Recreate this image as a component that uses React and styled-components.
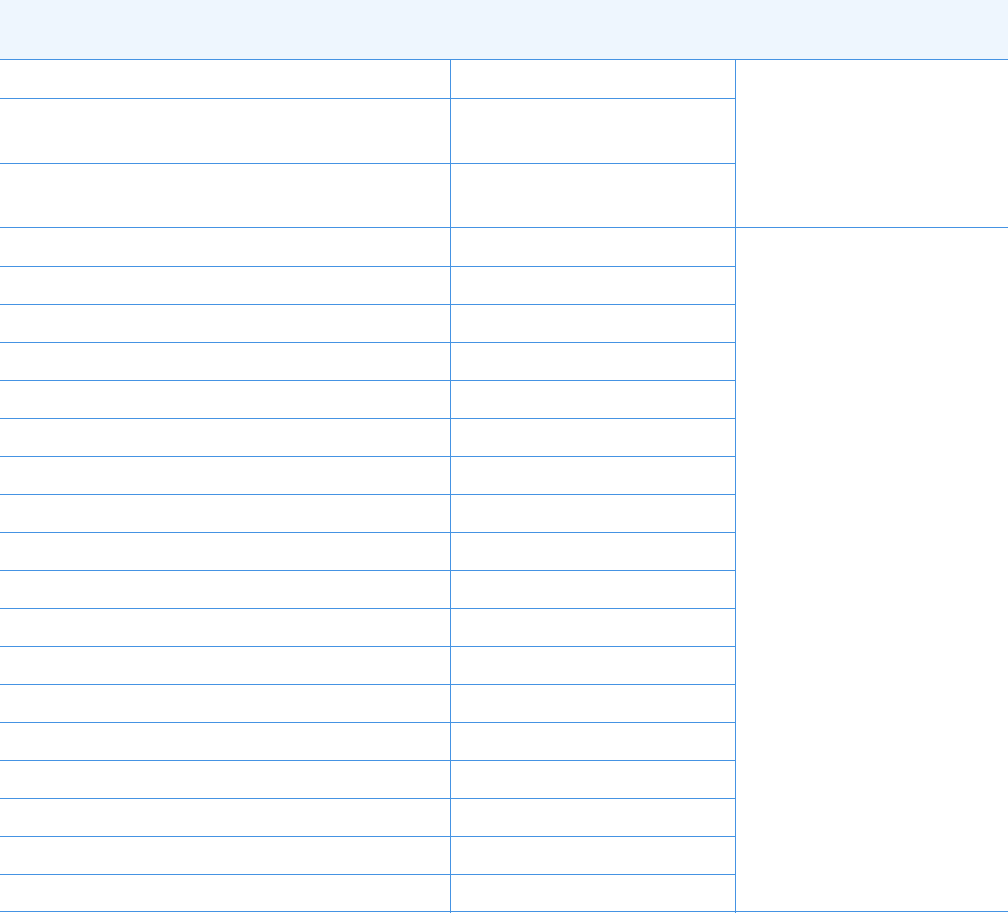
import React from 'react'
import styled, { createGlobalStyle } from 'styled-components'

const lineBlue = '#4593e3'
const headBlue = '#eef6fe'

const GlobalStyle = createGlobalStyle`
    html, body {
        margin: 0;
        padding: 0;
        background: #ffffff;
        font-family: 'Liberation Sans', Arial, sans-serif;
        overflow: hidden;
    }
`;

const Page = styled.div`
    width: 1008px;
    height: 913px;
    overflow: hidden;
`;

const Grid = styled.div`
    display: grid;
    grid-template-columns: 450px 284px 272px;
    grid-template-rows: 59px 38px 64px 63px 38px repeat(16, 37px) 36px 60px;
    gap: 1px;
    background: ${lineBlue};
    width: 1008px;
`;

const Header = styled.div`
    grid-column: 1 / -1;
    background: ${headBlue};
`;

const Cell = styled.div`
    background: #ffffff;
    grid-column: ${p => p.$col};
    grid-row: ${p => p.$rows || 'auto'};
`;

const bodyRows = Array.from({ length: 22 }, (_, i) => i + 2)

export default () => (
    <Page>
        <GlobalStyle />
        <Grid>
            <Header />
            {bodyRows.map(r => (
                <React.Fragment key={r}>
                    <Cell $col={1} $rows={`${r}`} />
                    <Cell $col={2} $rows={`${r}`} />
                </React.Fragment>
            ))}
            <Cell $col={3} $rows="2 / 5" />
            <Cell $col={3} $rows="5 / 23" />
            <Cell $col={3} $rows="23" />
        </Grid>
    </Page>
)
